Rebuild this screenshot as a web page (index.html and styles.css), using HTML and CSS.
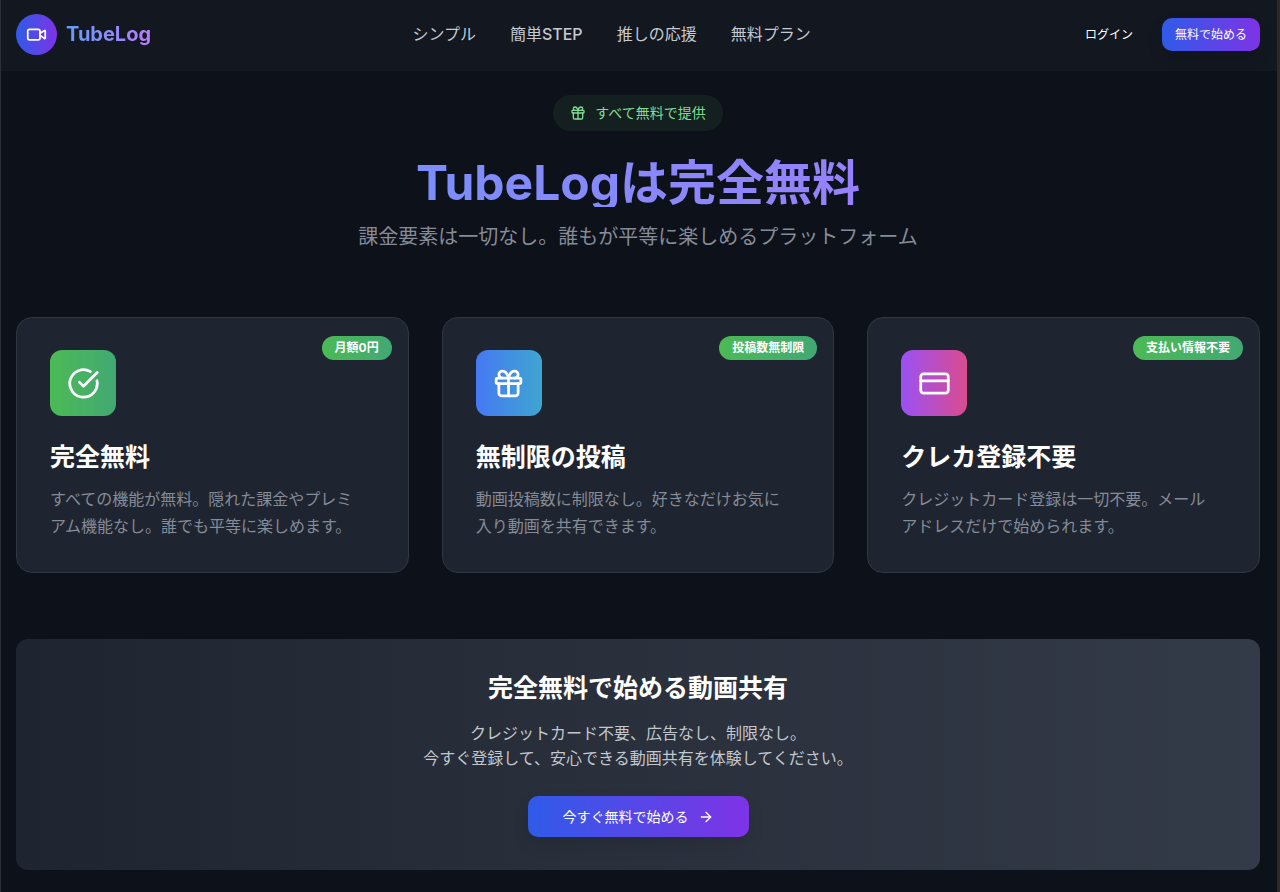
FILE: index.html
```html
<!DOCTYPE html>
<html lang="ja">
<head>
<meta charset="utf-8">
<meta name="viewport" content="width=device-width, initial-scale=1">
<title>TubeLog</title>
<link rel="stylesheet" href="styles.css">
</head>
<body>
<header class="header">
  <a class="logo" href="#">
    <span class="logo-mark">
      <svg class="icon icon-md" viewBox="0 0 24 24"><path d="m16 13 5.223 3.482a.5.5 0 0 0 .777-.416V7.870a.5.5 0 0 0-.752-.432L16 10.500"/><rect x="2" y="6" width="14" height="12" rx="2"/></svg>
    </span>
    <span class="logo-text">TubeLog</span>
  </a>
  <nav class="nav">
    <a href="#simple">シンプル</a>
    <a href="#step">簡単<span class="latin">STEP</span></a>
    <a href="#support">推しの応援</a>
    <a href="#plan">無料プラン</a>
  </nav>
  <div class="actions">
    <button class="btn btn-ghost" type="button">ログイン</button>
    <button class="btn btn-primary" type="button">無料で始める</button>
  </div>
</header>

<main class="main">
  <section class="hero" id="plan">
    <div class="hero-badge">
      <svg class="icon icon-sm" viewBox="0 0 24 24"><rect x="3" y="8" width="18" height="4" rx="1"/><path d="M12 8v13"/><path d="M19 12v7a2 2 0 0 1-2 2H7a2 2 0 0 1-2-2v-7"/><path d="M7.5 8a2.5 2.5 0 0 1 0-5A4.8 8 0 0 1 12 8a4.8 8 0 0 1 4.500-5 2.500 2.500 0 0 1 0 5"/></svg>
      <span>すべて無料で提供</span>
    </div>
    <h1 class="hero-title">TubeLogは完全無料</h1>
    <p class="hero-lead">課金要素は一切なし。誰もが平等に楽しめるプラットフォーム</p>
  </section>

  <section class="cards">
    <article class="card">
      <span class="tag">月額0円</span>
      <div class="card-icon green">
        <svg class="icon icon-lg" viewBox="0 0 24 24"><path d="M21.801 10A10 10 0 1 1 17 3.335"/><path d="m9 11 3 3L22 4"/></svg>
      </div>
      <h2 class="title">完全無料</h2>
      <p class="card-text">すべての機能が無料。隠れた課金やプレミアム機能なし。誰でも平等に楽しめます。</p>
    </article>
    <article class="card">
      <span class="tag">投稿数無制限</span>
      <div class="card-icon blue">
        <svg class="icon icon-lg" viewBox="0 0 24 24"><rect x="3" y="8" width="18" height="4" rx="1"/><path d="M12 8v13"/><path d="M19 12v7a2 2 0 0 1-2 2H7a2 2 0 0 1-2-2v-7"/><path d="M7.5 8a2.5 2.5 0 0 1 0-5A4.8 8 0 0 1 12 8a4.8 8 0 0 1 4.500-5 2.500 2.500 0 0 1 0 5"/></svg>
      </div>
      <h2 class="title">無制限の投稿</h2>
      <p class="card-text">動画投稿数に制限なし。好きなだけお気に入り動画を共有できます。</p>
    </article>
    <article class="card">
      <span class="tag">支払い情報不要</span>
      <div class="card-icon pink">
        <svg class="icon icon-lg" viewBox="0 0 24 24"><rect x="2" y="5" width="20" height="14" rx="2"/><path d="M2 10h20"/></svg>
      </div>
      <h2 class="title">クレカ登録不要</h2>
      <p class="card-text">クレジットカード登録は一切不要。メールアドレスだけで始められます。</p>
    </article>
  </section>

  <section class="cta">
    <h2 class="title">完全無料で始める動画共有</h2>
    <p class="cta-text">クレジットカード不要、広告なし、制限なし。<br>今すぐ登録して、安心できる動画共有を体験してください。</p>
    <button class="btn btn-primary btn-large" type="button">
      <span>今すぐ無料で始める</span>
      <svg class="icon icon-sm" viewBox="0 0 24 24"><path d="M5 12h14"/><path d="m12 5 7 7-7 7"/></svg>
    </button>
  </section>
</main>
</body>
</html>
```

FILE: styles.css
```css
* {
  box-sizing: border-box;
  margin: 0;
}

body {
  min-height: 100vh;
  border-left: 1px solid #2b313b;
  border-right: 3px solid #2a2a2c;
  background: #0d111a;
  color: #fff;
  font-family: Inter, "Noto Sans CJK JP", sans-serif;
  font-size: 16px;
  line-height: 25px;
}

.icon {
  flex: none;
  fill: none;
  stroke: currentColor;
  stroke-width: 2;
  stroke-linecap: round;
  stroke-linejoin: round;
}

.icon-sm { width: 16px; height: 16px; }
.icon-md { width: 21px; height: 21px; }
.icon-lg { width: 33px; height: 33px; }

.header {
  display: flex;
  align-items: center;
  justify-content: space-between;
  padding: 14px 17px 16px 15px;
  background: #131720;
}

.logo {
  display: flex;
  align-items: center;
  gap: 9px;
  text-decoration: none;
}

.logo-mark {
  display: grid;
  place-items: center;
  width: 41px;
  height: 41px;
  border-radius: 50%;
  background: linear-gradient(to right, #2f5be8, #7e33e6);
  color: #fff;
}

.logo-text {
  background: linear-gradient(to right, #629cfa, #b87cf9);
  background-clip: text;
  color: transparent;
  font-size: 20px;
  font-weight: 700;
}

.nav {
  display: flex;
  gap: 34px;
}

.nav a {
  color: #c6cad1;
  text-decoration: none;
}

.latin {
  font-weight: 500;
}

.actions {
  display: flex;
  gap: 16px;
}

.btn {
  display: inline-flex;
  align-items: center;
  justify-content: center;
  gap: 9px;
  border: 0;
  border-radius: 10px;
  padding: 6px 13px;
  color: #fff;
  font-family: inherit;
  font-size: 12px;
  line-height: 21px;
}

.btn-ghost {
  background: transparent;
}

.btn-primary {
  background: linear-gradient(to right, #2f5be8, #7e33e6);
  box-shadow: 0 8px 16px rgb(0 0 0 / 10%);
}

.btn-large {
  padding: 10px 35px;
  font-size: 14px;
}

.main {
  padding: 24px 17px 22px 15px;
}

.hero {
  display: flex;
  flex-direction: column;
  align-items: center;
  text-align: center;
}

.hero-badge {
  display: flex;
  align-items: center;
  gap: 9px;
  padding: 8px 17px;
  border-radius: 18px;
  background: #14201f;
  color: #82db94;
  font-size: 14px;
  line-height: 20px;
}

.hero-title {
  align-self: stretch;
  margin-top: 27px;
  background: linear-gradient(to right, #6299fa, #b076fa);
  background-clip: text;
  color: transparent;
  font-size: 48px;
  font-weight: 700;
  line-height: 49px;
}

.hero-lead {
  margin-top: 16px;
  color: #858b98;
  font-size: 20px;
  line-height: 29px;
}

.cards {
  display: grid;
  grid-template-columns: repeat(3, 1fr);
  gap: 33px;
  margin: 65px 0 66px;
}

.card {
  position: relative;
  padding: 32px 33px;
  border: 1px solid #303742;
  border-radius: 16px;
  background: #1f2530;
}

.card-icon {
  display: grid;
  place-items: center;
  width: 66px;
  height: 66px;
  margin-bottom: 25px;
  border-radius: 12px;
}

.green { background: linear-gradient(to right, #4cba55, #42a873); }
.blue { background: linear-gradient(to right, #4579f3, #3fa5d0); }
.pink { background: linear-gradient(to right, #9a51f4, #d94c8e); }

.tag {
  position: absolute;
  top: 18px;
  right: 16px;
  padding: 2px 13px;
  border-radius: 12px;
  background: linear-gradient(to right, #4cba55, #42a873);
  font-size: 12px;
  font-weight: 700;
  line-height: 20px;
}

.title {
  font-size: 25px;
  font-weight: 700;
  line-height: 33px;
}

.card-text {
  margin-top: 12px;
  padding-right: 9px;
  color: #858b97;
  line-height: 27px;
}

.cta {
  padding: 33px;
  border-radius: 12px;
  background: linear-gradient(to right, #1f2530, #343b48);
  text-align: center;
}

.cta-text {
  margin: 16px 0 25px;
  color: #c3c7ce;
}

@media (max-width: 900px) {
  .nav { display: none; }
  .cards { grid-template-columns: 1fr; }
}
```
